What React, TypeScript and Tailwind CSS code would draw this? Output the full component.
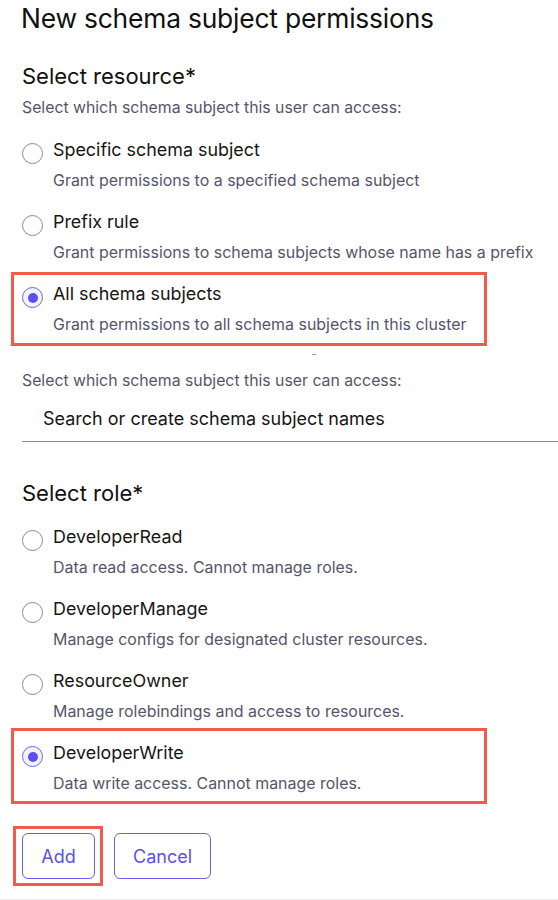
import React from "react";

type Opt = { label: string; desc: string; selected?: boolean; box?: { top: number; bottom: number } };

function Radio({ selected }: { selected?: boolean }) {
  if (selected) {
    return (
      <div className="mt-[7px] flex h-[21px] w-[21px] shrink-0 items-center justify-center rounded-full border border-[#6b62f2] bg-[#f3f2f8]">
        <div className="h-[10px] w-[10px] rounded-full bg-[#5a4ff6]" />
      </div>
    );
  }
  return <div className="mt-[7px] h-[21px] w-[21px] shrink-0 rounded-full border border-[#8a8898] bg-white" />;
}

function Row({ o }: { o: Opt }) {
  return (
    <div className="relative flex">
      <Radio selected={o.selected} />
      <div className="ml-[10px] flex flex-col">
        <div className="h-[28px] text-[17.9px] leading-[28px] text-[#161616]">{o.label}</div>
        <div className="mt-[6px] h-[22px] text-[15.95px] leading-[22px] text-[#56556a]">{o.desc}</div>
      </div>
      {o.box && (
        <div
          className="pointer-events-none absolute left-[-11px] w-[476px] border-[3px] border-[#f25a4c]"
          style={{ top: o.box.top, bottom: o.box.bottom }}
        />
      )}
    </div>
  );
}

export default function App() {
  const resources: Opt[] = [
    { label: "Specific schema subject", desc: "Grant permissions to a specified schema subject" },
    { label: "Prefix rule", desc: "Grant permissions to schema subjects whose name has a prefix" },
    {
      label: "All schema subjects",
      desc: "Grant permissions to all schema subjects in this cluster",
      selected: true,
      box: { top: -8, bottom: -10 },
    },
  ];
  const roles: Opt[] = [
    { label: "DeveloperRead", desc: "Data read access. Cannot manage roles." },
    { label: "DeveloperManage", desc: "Manage configs for designated cluster resources." },
    { label: "ResourceOwner", desc: "Manage rolebindings and access to resources." },
    {
      label: "DeveloperWrite",
      desc: "Data write access. Cannot manage roles.",
      selected: true,
      box: { top: -11, bottom: -9 },
    },
  ];
  return (
    <div
      className="relative h-[900px] w-[558px] overflow-hidden bg-white"
      style={{ fontFamily: "Inter, 'Noto Sans', sans-serif" }}
    >
      <div className="flex flex-col pl-[22px]">
        <div className="ml-[-1px] h-[36px] text-[26.4px] leading-[36px] tracking-[-0.2px] text-[#111111]">
          New schema subject permissions
        </div>
        <div className="mt-[25px] h-[30px] text-[22px] leading-[30px] text-[#111111]">Select resource*</div>
        <div className="mt-[6px] h-[22px] text-[15.8px] leading-[22px] text-[#56556a]">
          Select which schema subject this user can access:
        </div>
        <div className="mt-[17px] flex flex-col gap-[16px]">
          {resources.map((o) => (
            <Row key={o.label} o={o} />
          ))}
        </div>
        <div className="ml-[290px] mt-[18px] h-[1px] w-[4px] bg-[#9a9aa6]" />
        <div className="mt-[15px] h-[22px] text-[15.8px] leading-[22px] text-[#56556a]">
          Select which schema subject this user can access:
        </div>
        <div className="mt-[12px] border-b border-[#908ea2] pb-[8px] pt-[1px]">
          <div className="ml-[21px] h-[28px] text-[18px] leading-[28px] text-[#161616]">
            Search or create schema subject names
          </div>
        </div>
        <div className="mt-[36px] h-[30px] text-[22px] leading-[30px] text-[#111111]">Select role*</div>
        <div className="mt-[15px] flex flex-col gap-[16px]">
          {roles.map((o) => (
            <Row key={o.label} o={o} />
          ))}
        </div>
        <div className="mt-[38px] flex gap-[19px]">
          <div className="relative">
            <button className="flex h-[46px] w-[73px] items-center justify-center rounded-[6px] border border-[#6a60f2] bg-white text-[18px] text-[#5b50ea]">
              Add
            </button>
            <div className="pointer-events-none absolute bottom-[-7px] left-[-9px] right-[-8px] top-[-7px] border-[3px] border-[#f25a4c]" />
          </div>
          <button className="flex h-[46px] w-[97px] items-center justify-center rounded-[6px] border border-[#6a60f2] bg-white text-[18px] text-[#5b50ea]">
            Cancel
          </button>
        </div>
      </div>
      <div className="absolute bottom-0 left-0 h-[1px] w-full bg-[#eeeeee]" />
    </div>
  );
}
